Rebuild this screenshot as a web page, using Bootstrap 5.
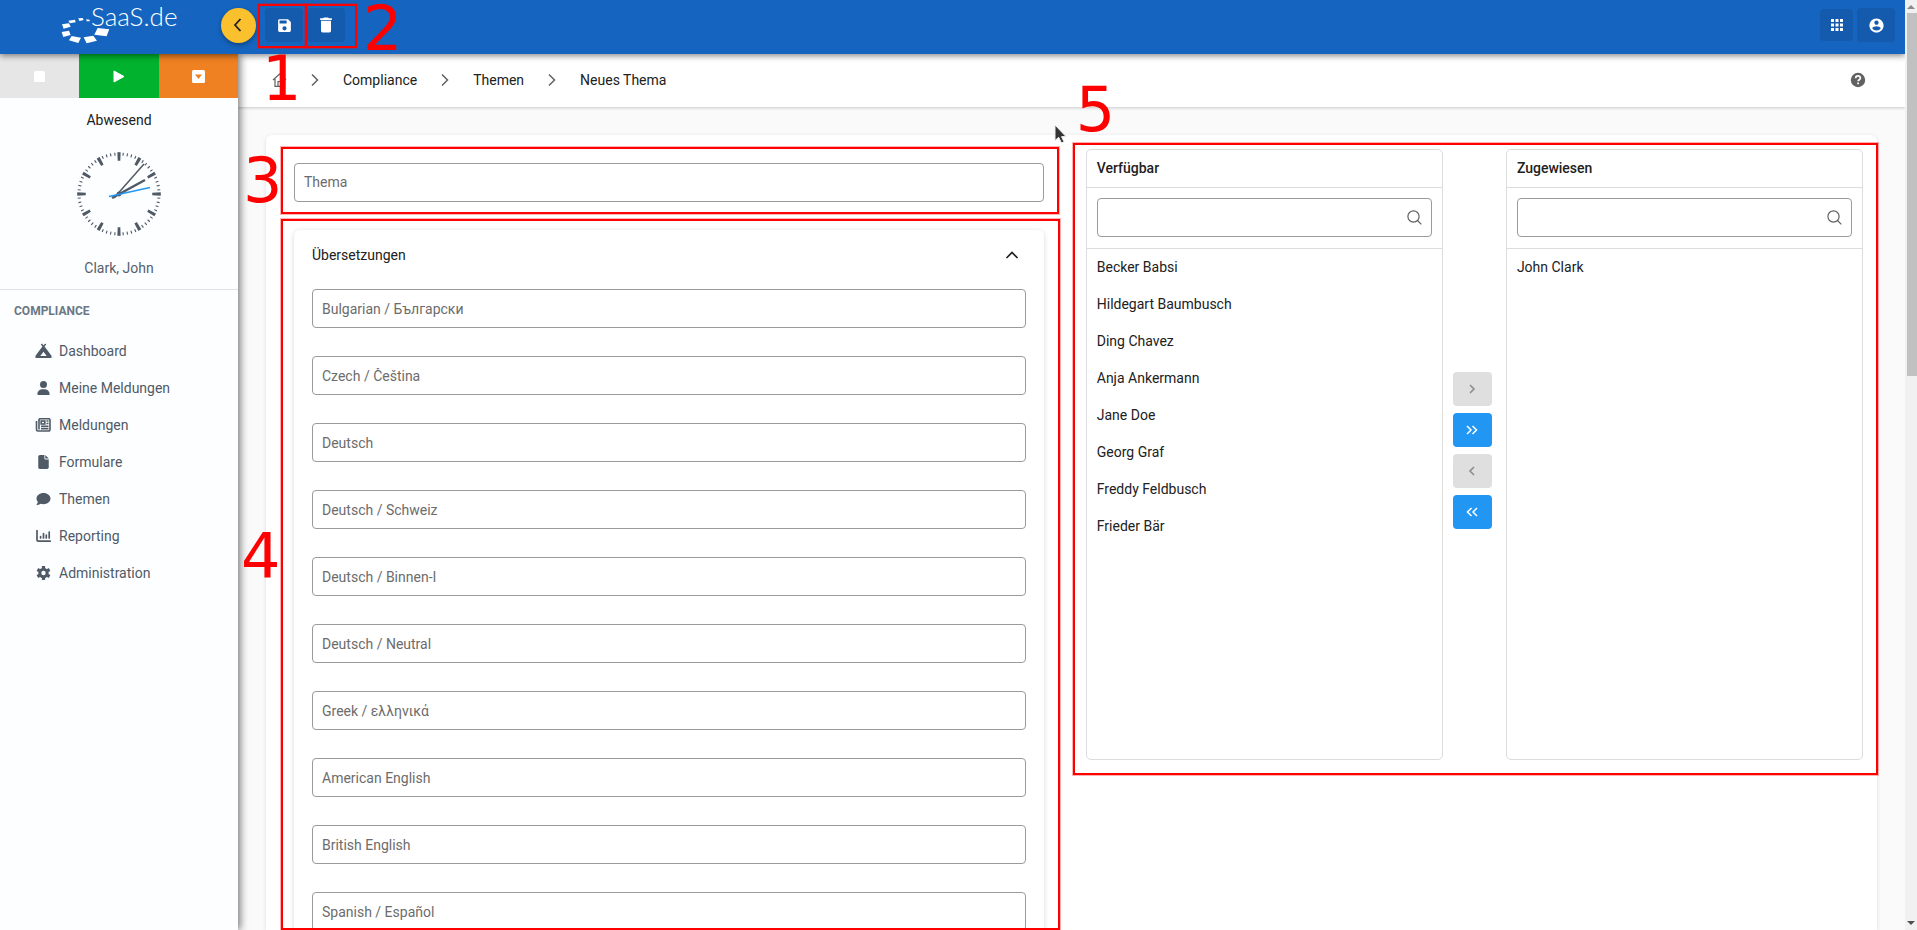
<!DOCTYPE html>
<html lang="de">
<head>
<meta charset="utf-8">
<meta name="viewport" content="width=device-width, initial-scale=1">
<title>Neues Thema</title>
<link href="https://cdn.jsdelivr.net/npm/bootstrap@5.3.0/dist/css/bootstrap.min.css" rel="stylesheet">
<style>
body{font-family:Roboto,"Noto Sans",sans-serif;font-size:14px;line-height:20px;color:#212121;background:#fafafa}
svg{display:block;flex:none}
.topbar{height:54px;background:#1565c0;box-shadow:0 2px 6px rgba(0,0,0,.45);z-index:5}
.logo-area{width:221px;padding-left:60px}
.logo-area text{font-family:Lato,"Open Sans",sans-serif;font-size:26px;font-weight:300}
.round-btn{width:35px;height:35px;border-radius:50%;background:#fbc02d;border:0;box-shadow:0 2px 5px rgba(0,0,0,.35)}
.tools{margin:0 10px 4px 9px;gap:4px}
.tool-btn{width:38px;height:34px;border-radius:4px;background:#145bad;border:0;color:#fff}
.tool-btn.compact{width:33px;height:32px}
.sidebar{width:238px;background:#fdfeff;box-shadow:2px 0 8px rgba(0,0,0,.55);z-index:3}
.clock-btn{height:44px;border:0;color:#fff}
.clock-stop{background:#e6e6e6}.clock-play{background:#00b22d}.clock-pause{background:#ef8122}
.userbox{border-bottom:1px solid #dee2e6;height:192px;padding-top:12px;gap:17px}
.muted-dark{color:#56606b}
.menu-title{font-size:12px;font-weight:700;color:#6b7783;padding:11px 14px 11px}
.menu-link{height:37px;padding-left:35px;gap:7px;color:#4f5a66;text-decoration:none}
.crumbs{height:53px;background:#fff;box-shadow:0 1px 3px rgba(0,0,0,.2);padding:0 38px 2px 34px;z-index:1}
.crumbs a,.crumbs span{color:#212121;text-decoration:none}
.content{padding:28px 28px 0}
.sheet{background:#fff;border-radius:6px 6px 0 0;box-shadow:0 1px 4px rgba(0,0,0,.12);padding:14px 14px 0;gap:28px}
.half{flex:0 1 50%;min-width:0}
.left-pad{padding:14px 14px 0;gap:28px}
.field{height:39px;border:1px solid #9a9a9a;border-radius:4px;padding:0 9px 1px;font-size:14px;color:#212121;background:#fff}
.field::placeholder{color:#6c6c6c;opacity:1}
.trans{border-radius:6px;box-shadow:0 1px 5px rgba(0,0,0,.16);padding:0 18px 28px}
.trans-head{height:59px;padding:0 6px 10px 0;background:none;border:0;color:#212121}
.trans-list{gap:28px}
.trans-list .field{padding-bottom:0}
.trans-area{min-height:0;height:0}
.pick{height:611px}
.pick-list{border:1px solid #dcdcdc;border-radius:5px;flex:1 1 0;min-width:0}
.pick-head{height:38px;padding:0 10px 2px;font-weight:500;border-bottom:1px solid #dcdcdc}
.pick-filter{padding:10px 10px 11px;border-bottom:1px solid #dcdcdc}
.pick-filter svg{position:absolute;right:20px;top:22px}
.pick-item{height:37px;padding:0 10px 1px}
.moves{width:39px;gap:7px;margin:0 14px 8px 10px}
.move-btn{height:34px;border-radius:4px;background:#2196f3;color:#fff;border:0}
.move-btn:disabled{background:#dfdfdf;color:#8c8c8c}
.scroll{width:12px;background:#f1f1f1}
.scroll-end{height:13px}
.scroll-thumb{background:#c1c1c1;height:39%;margin-left:2px}
.mark-box{position:absolute;border:2px solid red;box-shadow:0 0 0 1px rgba(255,0,0,.3);pointer-events:none;z-index:9}
.mark-no{position:absolute;font:62px/62px "DejaVu Sans",sans-serif;color:red;pointer-events:none;z-index:9}
.box-1{inset:-4px -4px -6px -7px}.no-1{left:-3px;top:40px}
.box-2{inset:-4px -12px -6px -2px}.no-2{left:56px;top:-10px}
.box-3{inset:-16px -15px -12px -13px}.no-3{left:-51px;top:-13px}
.box-4{inset:-11px -16px 0 -13px}.no-4{left:-53px;top:296px}
.box-5{inset:-6px -15px -15px -13px}.no-5{left:-10px;top:-70px}
.pointer{position:absolute;left:760px;top:-39px;z-index:9}
</style>
</head>
<body>
<div class="d-flex vh-100 overflow-hidden">
 <div class="d-flex flex-column flex-grow-1 overflow-hidden">
  <header class="topbar d-flex align-items-center position-relative">
   <div class="logo-area">
    <svg width="125" height="54" viewBox="60 0 125 54" fill="#fff" role="img" aria-label="SaaS.de">
     <text x="91" y="26">SaaS.de</text>
     <path transform="translate(50 0) scale(.333)" d="M143 84l35 4-8 21-37-5zM101 112l29-5 11 15-31 8zM65 108l28 5-8 16-28-8zM35 96l22-4 5 13-22 6zM36 73l21-3 5 10-21 6zM55 62l20-3 2 8-17 3zM85 55l13-1 3 6-13 3zM109 58l10 1v5h-9z"/>
    </svg>
   </div>
   <button class="round-btn d-flex align-items-center justify-content-center p-0 mb-1" aria-label="Menü einklappen"><svg width="16" height="16" viewBox="0 0 16 16" fill="none" stroke="#212121" stroke-width="1.800"><path d="M9.500 2L4 8l5.500 6"/></svg></button>
   <div class="tools d-flex">
    <div class="position-relative">
     <button class="tool-btn d-flex align-items-center justify-content-center p-0" aria-label="Speichern"><svg width="17" height="17" viewBox="0 0 24 24" fill="currentColor"><path d="M15,9H5V5H15M12,19A3,3 0 0,1 9,16A3,3 0 0,1 12,13A3,3 0 0,1 15,16A3,3 0 0,1 12,19M17,3H5C3.890,3 3,3.900 3,5V19A2,2 0 0,0 5,21H19A2,2 0 0,0 21,19V7L17,3Z"/></svg></button>
     <div class="mark-box box-1"></div><div class="mark-no no-1">1</div>
    </div>
    <div class="position-relative">
     <button class="tool-btn d-flex align-items-center justify-content-center p-0" aria-label="Löschen"><svg width="20" height="20" viewBox="0 0 24 24" fill="currentColor"><path d="M19,4H15.500L14.500,3H9.500L8.500,4H5V6H19M6,19A2,2 0 0,0 8,21H16A2,2 0 0,0 18,19V7H6V19Z"/></svg></button>
     <div class="mark-box box-2"></div><div class="mark-no no-2">2</div>
    </div>
   </div>
   <div class="tools d-flex align-items-center ms-auto">
    <button class="tool-btn compact d-flex align-items-center justify-content-center p-0" aria-label="Apps"><svg width="18" height="18" viewBox="0 0 24 24" fill="currentColor"><path d="M4 4h4v4H4zM10 4h4v4h-4zM16 4h4v4h-4zM4 10h4v4H4zM10 10h4v4h-4zM16 10h4v4h-4zM4 16h4v4H4zM10 16h4v4h-4zM16 16h4v4h-4z"/></svg></button>
    <button class="tool-btn d-flex align-items-center justify-content-center p-0" aria-label="Konto"><svg width="17" height="17" viewBox="0 0 24 24" fill="currentColor"><path d="M12 2C6.480 2 2 6.480 2 12s4.480 10 10 10 10-4.480 10-10S17.520 2 12 2zm0 3c1.660 0 3 1.340 3 3s-1.340 3-3 3-3-1.340-3-3 1.340-3 3-3zm0 14.200c-2.500 0-4.710-1.280-6-3.220.03-1.990 4-3.080 6-3.080s5.970 1.090 6 3.080c-1.290 1.940-3.500 3.220-6 3.220z"/></svg></button>
   </div>
  </header>
  <div class="d-flex flex-grow-1 overflow-hidden">
   <aside class="sidebar flex-shrink-0 position-relative">
    <div class="d-flex">
     <button class="clock-btn clock-stop w-100 d-flex align-items-center justify-content-center" aria-label="Stopp"><svg width="11" height="11" viewBox="0 0 11 11"><rect width="11" height="11" rx="1.500" fill="#fff"/></svg></button>
     <button class="clock-btn clock-play w-100 d-flex align-items-center justify-content-center" aria-label="Start"><svg width="12" height="13" viewBox="0 0 12 13"><path d="M1 1l10 5.500L1 12z" fill="#fff" stroke="#fff" stroke-linejoin="round"/></svg></button>
     <button class="clock-btn clock-pause w-100 d-flex align-items-center justify-content-center" aria-label="Pause"><svg width="13" height="13" viewBox="0 0 13 13"><rect width="13" height="13" rx="1.500" fill="#fff"/><path d="M3 4.500h7L6.500 9z" fill="#ef8122"/></svg></button>
    </div>
    <div class="userbox d-flex flex-column align-items-center">
     <div>Abwesend</div>
     <svg width="94" height="94" viewBox="-47 -47 94 94" fill="none" stroke="#4f5a66" aria-hidden="true">
      <circle r="40" stroke-width="3" pathLength="360" stroke-dasharray="1.600 4.400" stroke-dashoffset=".8"/>
      <circle r="37.500" stroke-width="8.500" pathLength="360" stroke-dasharray="4.600 25.400" stroke-dashoffset="2.300"/>
      <path d="M-5 4L25-30" stroke-width="1.500"/><path d="M-7 4L26-14" stroke-width="2.400"/><circle r="2" fill="#4f5a66"/><path d="M-10 2.500L31-6.500" stroke="#2196f3" stroke-width="1.300"/>
     </svg>
     <div class="muted-dark">Clark, John</div>
    </div>
    <div class="menu-title">COMPLIANCE</div>
    <nav aria-label="Compliance">
     <a class="menu-link d-flex align-items-center" href="#"><svg width="17" height="16" viewBox="0 0 17 16" fill="currentColor"><path d="M5.800 1.400L7 .6 8.500 2.500 10 .6l1.200.8L9.600 3.600 16.500 12.800V15H.5v-2.200L7.400 3.600zM8.500 8.700L5.300 13h6.400z" fill-rule="evenodd"/></svg>Dashboard</a>
     <a class="menu-link d-flex align-items-center" href="#"><svg width="17" height="14" viewBox="-32 0 512 512" fill="currentColor"><path d="M224 256A128 128 0 1 0 224 0a128 128 0 1 0 0 256zm-45.700 48C79.800 304 0 383.800 0 482.300C0 498.700 13.300 512 29.700 512H418.300c16.400 0 29.700-13.300 29.700-29.700C448 383.800 368.200 304 269.700 304H178.300z"/></svg>Meine Meldungen</a>
     <a class="menu-link d-flex align-items-center" href="#"><svg width="17" height="14" viewBox="-1 0 17 14" fill="none" stroke="currentColor" stroke-width="1.600"><path d="M3 2.700V2a1.300 1.300 0 0 1 1.300-1.300h8.400A1.300 1.300 0 0 1 14 2v9.500a1.500 1.500 0 0 1-1.500 1.500H2A1.500 1.500 0 0 1 .5 11.500V3"/><path d="M3 2v9.500" /><rect x="5.200" y="3" width="3.600" height="3"/><path d="M10.500 3h2M10.500 5.500h2M5 8.200h7.500M5 10.600h7.500"/></svg>Meldungen</a>
     <a class="menu-link d-flex align-items-center" href="#"><svg width="17" height="14" viewBox="-64 0 512 512" fill="currentColor"><path d="M0 64C0 28.700 28.700 0 64 0H224V128c0 17.700 14.300 32 32 32H384V448c0 35.300-28.700 64-64 64H64c-35.300 0-64-28.700-64-64V64zm384 64H256V0L384 128z"/></svg>Formulare</a>
     <a class="menu-link d-flex align-items-center" href="#"><svg width="17" height="14" viewBox="0 0 512 512" fill="currentColor"><path d="M512 240c0 114.900-114.600 208-256 208c-37.100 0-72.300-6.400-104.100-17.900c-11.900 8.700-31.300 20.600-54.300 30.600C73.600 471.100 44.700 480 16 480c-6.500 0-12.300-3.900-14.800-9.900c-2.500-6-1.100-12.800 3.400-17.400c10-10 20-22 21.700-30c10-16.600 19.500-38.400 21.400-62.900C17.700 326.800 0 285.100 0 240C0 125.100 114.600 32 256 32s256 93.100 256 208z"/></svg>Themen</a>
     <a class="menu-link d-flex align-items-center" href="#"><svg width="17" height="14" viewBox="-1 0 17 14" fill="none" stroke="currentColor" stroke-width="1.700" stroke-linecap="round"><path d="M1 1.500v9.500a1.200 1.200 0 0 0 1.200 1.200h12M4.600 7.500v1.500M7.500 4.500v4.500M10.300 6v3M13.200 3v6"/></svg>Reporting</a>
     <a class="menu-link d-flex align-items-center" href="#"><svg width="17" height="14" viewBox="-8.500 -7 17 14" fill="none" stroke="currentColor"><circle r="3.700" stroke-width="3"/><path d="M0-7v2.500M0 7v-2.500M6.100-3.500L4-2.300M-6.100 3.500L-4 2.300M6.100 3.500L4 2.300M-6.100-3.500L-4-2.300" stroke-width="3.200"/></svg>Administration</a>
    </nav>
   </aside>
   <main class="flex-grow-1 d-flex flex-column overflow-hidden">
    <nav class="crumbs d-flex align-items-center position-relative flex-shrink-0" aria-label="Pfad">
     <a href="#" aria-label="Start"><svg width="15" height="14" viewBox="0 0 15 14" fill="none" stroke="#616161" stroke-width="1.200"><path d="M1 7L7.500 1 14 7M3 6v7.300h9V6M6 13V8.500h3V13"/></svg></a>
     <svg class="ms-4" width="8" height="14" viewBox="0 0 8 14" fill="none" stroke="#616161" stroke-width="1.500"><path d="M1 1.500L6.500 7 1 12.500"/></svg>
     <a href="#" class="ms-4">Compliance</a>
     <svg class="ms-4" width="8" height="14" viewBox="0 0 8 14" fill="none" stroke="#616161" stroke-width="1.500"><path d="M1 1.500L6.500 7 1 12.500"/></svg>
     <a href="#" class="ms-4">Themen</a>
     <svg class="ms-4" width="8" height="14" viewBox="0 0 8 14" fill="none" stroke="#616161" stroke-width="1.500"><path d="M1 1.500L6.500 7 1 12.500"/></svg>
     <span class="ms-4">Neues Thema</span>
     <a href="#" class="ms-auto" aria-label="Hilfe"><svg width="18" height="18" viewBox="0 0 18 18"><circle cx="9" cy="9" r="7.200" fill="#616161"/><path d="M6.700 7.200c0-3 4.700-2.900 4.700-.2 0 1.700-2.300 1.700-2.300 3.300M9.100 11.500v1.800" fill="none" stroke="#fff" stroke-width="1.700"/></svg></a>
    </nav>
    <div class="content flex-grow-1 d-flex">
     <div class="sheet d-flex flex-grow-1">
      <form class="half left-pad d-flex flex-column">
       <div class="position-relative">
        <input class="field w-100 d-block" type="text" placeholder="Thema" aria-label="Thema">
        <div class="mark-box box-3"></div><div class="mark-no no-3">3</div>
        <svg class="pointer" width="15" height="22" viewBox="0 0 15 22" aria-hidden="true"><path d="M1 1v15.500l3.700-3.200L7.500 19l2.500-1.200-2.500-5.200H12z" fill="#333" stroke="#eee"/></svg>
       </div>
       <div class="trans-area position-relative flex-fill">
        <section class="trans">
         <button type="button" class="trans-head w-100 d-flex align-items-center justify-content-between">Übersetzungen<svg width="16" height="16" viewBox="0 0 16 16" fill="none" stroke="#212121" stroke-width="1.700"><path d="M2.500 11L8 5.500l5.500 5.500"/></svg></button>
         <div class="trans-list d-flex flex-column">
          <input class="field w-100" type="text" placeholder="Bulgarian / Български" aria-label="Bulgarian / Български">
          <input class="field w-100" type="text" placeholder="Czech / Čeština" aria-label="Czech / Čeština">
          <input class="field w-100" type="text" placeholder="Deutsch" aria-label="Deutsch">
          <input class="field w-100" type="text" placeholder="Deutsch / Schweiz" aria-label="Deutsch / Schweiz">
          <input class="field w-100" type="text" placeholder="Deutsch / Binnen-I" aria-label="Deutsch / Binnen-I">
          <input class="field w-100" type="text" placeholder="Deutsch / Neutral" aria-label="Deutsch / Neutral">
          <input class="field w-100" type="text" placeholder="Greek / ελληνικά" aria-label="Greek / ελληνικά">
          <input class="field w-100" type="text" placeholder="American English" aria-label="American English">
          <input class="field w-100" type="text" placeholder="British English" aria-label="British English">
          <input class="field w-100" type="text" placeholder="Spanish / Español" aria-label="Spanish / Español">
         </div>
        </section>
        <div class="mark-box box-4"></div><div class="mark-no no-4">4</div>
       </div>
      </form>
      <div class="half">
       <div class="pick d-flex position-relative">
        <section class="pick-list">
         <div class="pick-head d-flex align-items-center">Verfügbar</div>
         <div class="pick-filter position-relative"><input class="field w-100 d-block" type="text" aria-label="Verfügbar filtern"><svg width="15" height="15" viewBox="0 0 15 15" fill="none" stroke="#616161" stroke-width="1.200"><circle cx="6.500" cy="6.500" r="5.600"/><path d="M10.500 10.500L14.300 14.300"/></svg></div>
         <ul class="list-unstyled m-0">
          <li class="pick-item d-flex align-items-center">Becker Babsi</li>
          <li class="pick-item d-flex align-items-center">Hildegart Baumbusch</li>
          <li class="pick-item d-flex align-items-center">Ding Chavez</li>
          <li class="pick-item d-flex align-items-center">Anja Ankermann</li>
          <li class="pick-item d-flex align-items-center">Jane Doe</li>
          <li class="pick-item d-flex align-items-center">Georg Graf</li>
          <li class="pick-item d-flex align-items-center">Freddy Feldbusch</li>
          <li class="pick-item d-flex align-items-center">Frieder Bär</li>
         </ul>
        </section>
        <div class="moves d-flex flex-column justify-content-center">
         <button class="move-btn d-flex align-items-center justify-content-center" disabled aria-label="Zuweisen"><svg width="12" height="10" viewBox="0 0 12 10" fill="none" stroke="currentColor" stroke-width="1.600"><path d="M4 1l4 4-4 4"/></svg></button>
         <button class="move-btn d-flex align-items-center justify-content-center" aria-label="Alle zuweisen"><svg width="12" height="10" viewBox="0 0 12 10" fill="none" stroke="currentColor" stroke-width="1.500"><path d="M1 1l4 4-4 4M6.500 1l4 4-4 4"/></svg></button>
         <button class="move-btn d-flex align-items-center justify-content-center" disabled aria-label="Entfernen"><svg width="12" height="10" viewBox="0 0 12 10" fill="none" stroke="currentColor" stroke-width="1.600"><path d="M8 1L4 5l4 4"/></svg></button>
         <button class="move-btn d-flex align-items-center justify-content-center" aria-label="Alle entfernen"><svg width="12" height="10" viewBox="0 0 12 10" fill="none" stroke="currentColor" stroke-width="1.500"><path d="M5.500 1l-4 4 4 4M11 1L7 5l4 4"/></svg></button>
        </div>
        <section class="pick-list">
         <div class="pick-head d-flex align-items-center">Zugewiesen</div>
         <div class="pick-filter position-relative"><input class="field w-100 d-block" type="text" aria-label="Zugewiesen filtern"><svg width="15" height="15" viewBox="0 0 15 15" fill="none" stroke="#616161" stroke-width="1.200"><circle cx="6.500" cy="6.500" r="5.600"/><path d="M10.500 10.500L14.300 14.300"/></svg></div>
         <ul class="list-unstyled m-0"><li class="pick-item d-flex align-items-center">John Clark</li></ul>
        </section>
        <div class="mark-box box-5"></div><div class="mark-no no-5">5</div>
       </div>
      </div>
     </div>
    </div>
   </main>
  </div>
 </div>
 <div class="scroll flex-shrink-0 d-flex flex-column" aria-hidden="true">
  <div class="scroll-end d-flex align-items-center justify-content-center"><svg width="8" height="5" viewBox="0 0 8 5"><path d="M0 5l4-4 4 4z" fill="#8a8a8a"/></svg></div>
  <div class="scroll-thumb"></div>
  <div class="scroll-end d-flex align-items-center justify-content-center mt-auto"><svg width="8" height="5" viewBox="0 0 8 5"><path d="M0 0l4 4 4-4z" fill="#505050"/></svg></div>
 </div>
</div>
<script src="https://cdn.jsdelivr.net/npm/bootstrap@5.3.0/dist/js/bootstrap.bundle.min.js"></script>
</body>
</html>
